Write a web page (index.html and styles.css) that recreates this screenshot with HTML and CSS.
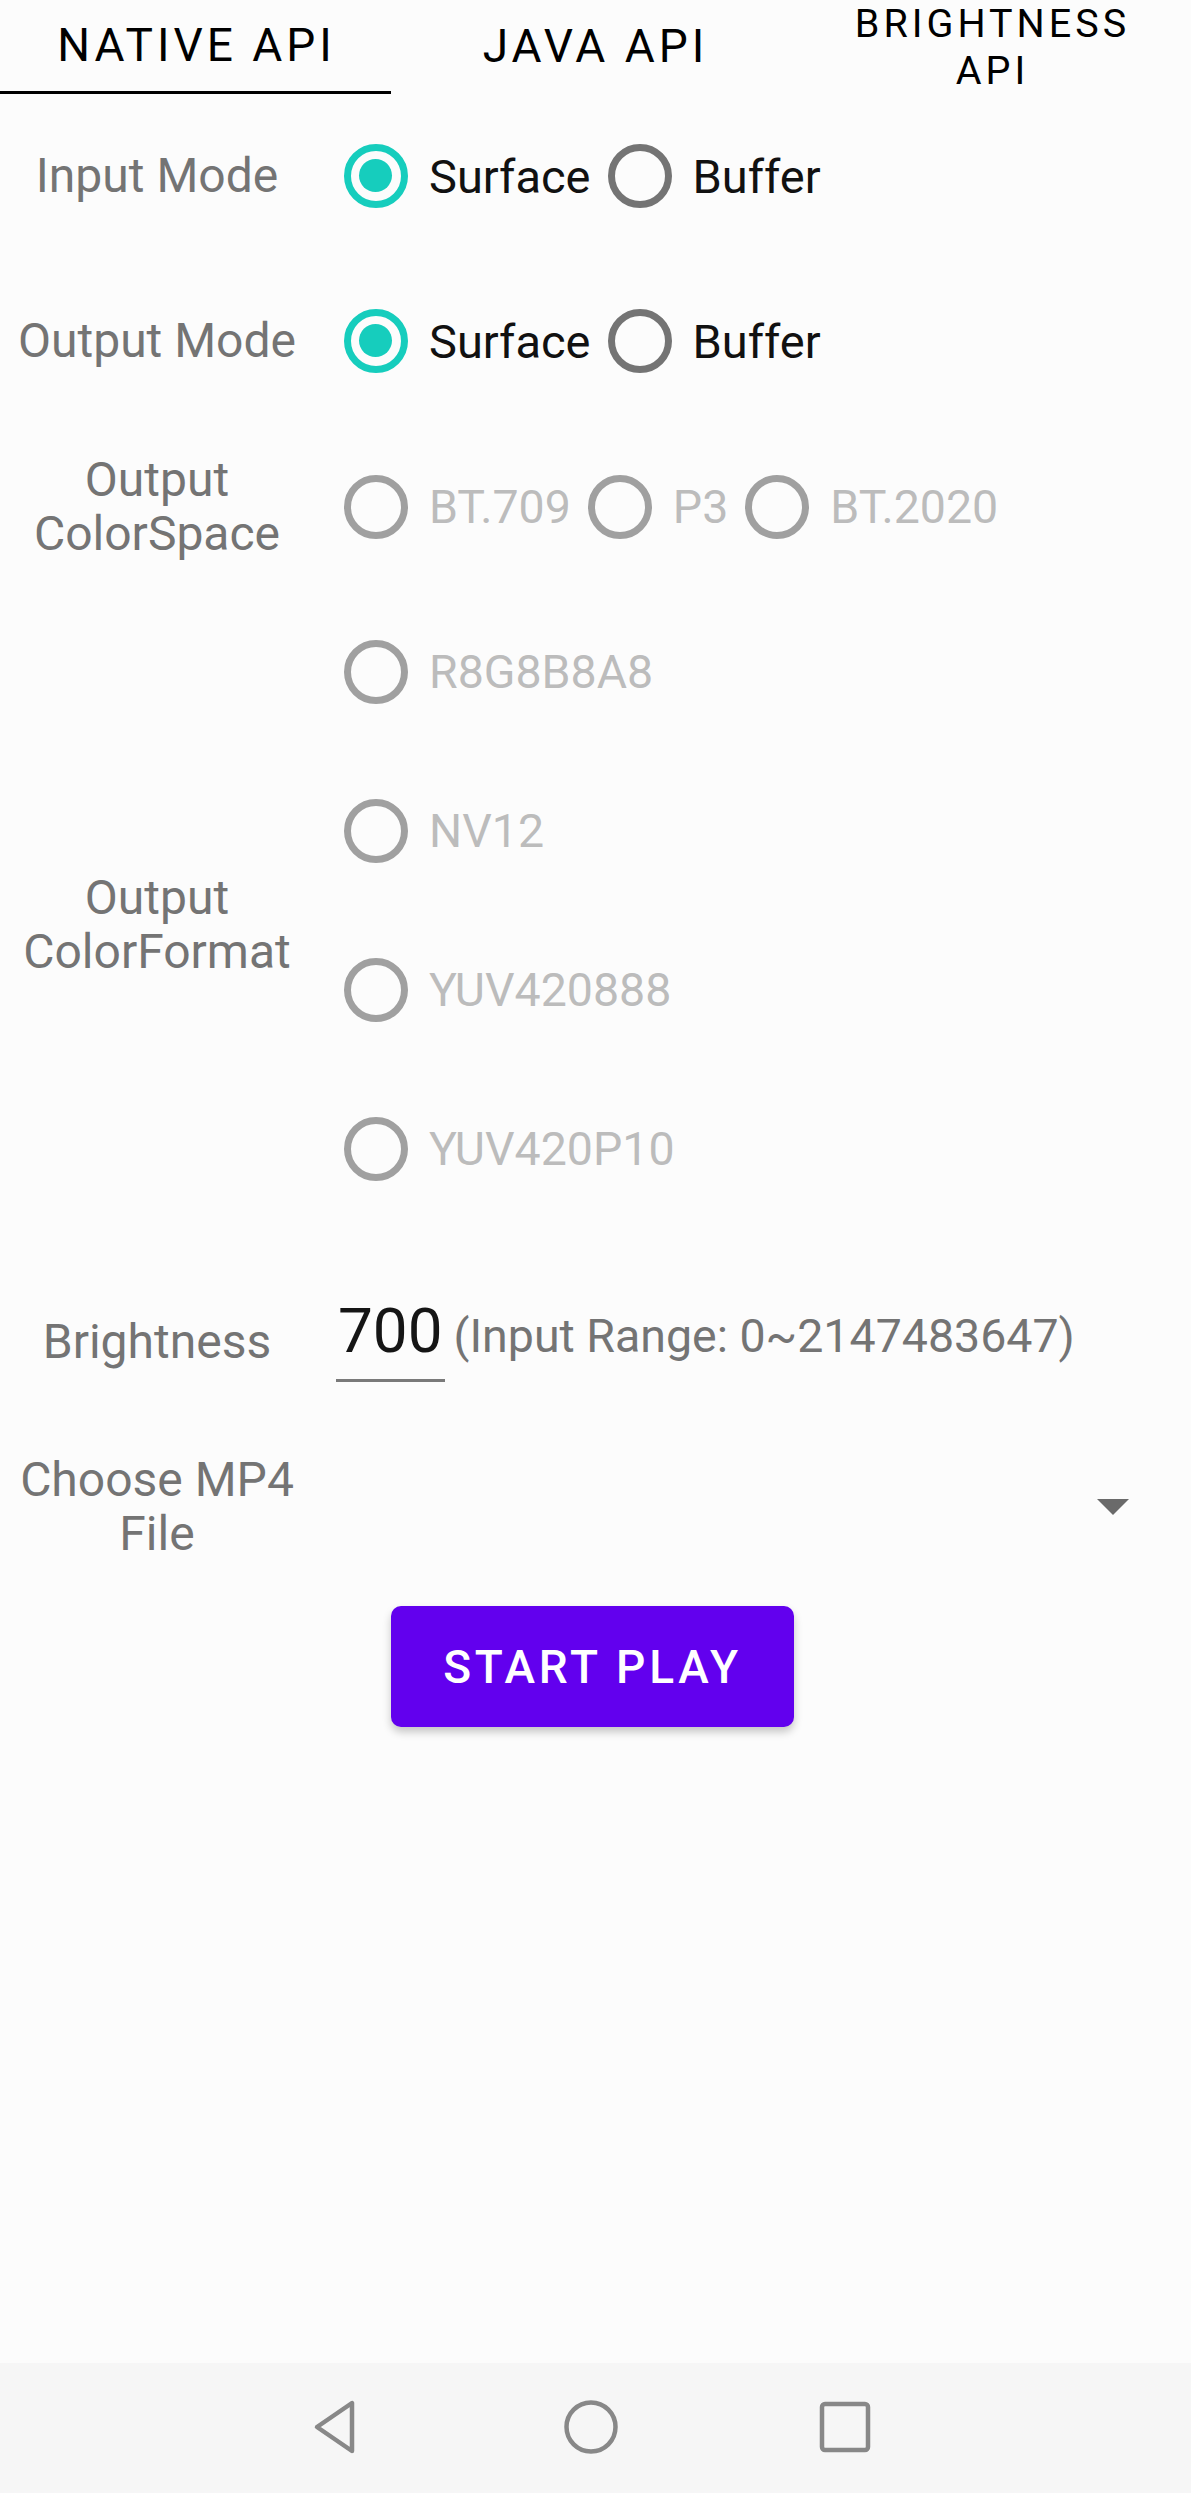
FILE: index.html
```html
<!DOCTYPE html>
<html>
<head>
<meta charset="utf-8">
<link rel="stylesheet" href="styles.css">
</head>
<body>
<div class="screen">
  <div class="tabs">
    <div class="tab active"><span>NATIVE API</span></div>
    <div class="tab"><span>JAVA API</span></div>
    <div class="tab multi"><span>BRIGHTNESS<br>API</span></div>
  </div>

  <div class="form">
    <div class="row r1 first">
      <div class="label">Input Mode</div>
      <div class="options">
        <div class="radio checked"><span class="dot"></span><span class="txt">Surface</span></div>
        <div class="radio"><span class="dot"></span><span class="txt">Buffer</span></div>
      </div>
    </div>
    <div class="row r1">
      <div class="label">Output Mode</div>
      <div class="options">
        <div class="radio checked"><span class="dot"></span><span class="txt">Surface</span></div>
        <div class="radio"><span class="dot"></span><span class="txt">Buffer</span></div>
      </div>
    </div>
    <div class="row r1">
      <div class="label">Output<br>ColorSpace</div>
      <div class="options">
        <div class="radio disabled"><span class="dot"></span><span class="txt">BT.709</span></div>
        <div class="radio disabled"><span class="dot"></span><span class="txt">P3</span></div>
        <div class="radio disabled"><span class="dot"></span><span class="txt">BT.2020</span></div>
      </div>
    </div>
    <div class="row fmt">
      <div class="label">Output<br>ColorFormat</div>
      <div class="options column">
        <div class="radio disabled item"><span class="dot"></span><span class="txt">R8G8B8A8</span></div>
        <div class="radio disabled item"><span class="dot"></span><span class="txt">NV12</span></div>
        <div class="radio disabled item"><span class="dot"></span><span class="txt">YUV420888</span></div>
        <div class="radio disabled item"><span class="dot"></span><span class="txt">YUV420P10</span></div>
      </div>
    </div>
    <div class="row bright">
      <div class="label">Brightness</div>
      <div class="bright-field">
        <span class="value">700</span>
        <span class="hint">(Input Range: 0~2147483647)</span>
      </div>
    </div>
    <div class="row choose">
      <div class="label">Choose MP4<br>File</div>
      <div class="spinner"><span class="arrow"></span></div>
    </div>
    <div class="btn-row">
      <button class="play">START PLAY</button>
    </div>
  </div>

  <div class="spacer"></div>

  <div class="navbar">
    <svg class="nav-icon" width="52" height="56" viewBox="0 0 52 56">
      <path d="M41 4 L41 52 L6 28 Z" fill="none" stroke="#888" stroke-width="4.5" stroke-linejoin="round"/>
    </svg>
    <svg class="nav-icon" width="56" height="56" viewBox="0 0 56 56">
      <circle cx="28" cy="28" r="24.5" fill="none" stroke="#888" stroke-width="4.5"/>
    </svg>
    <svg class="nav-icon" width="52" height="52" viewBox="0 0 52 52">
      <rect x="3" y="3" width="46" height="46" rx="3" fill="none" stroke="#888" stroke-width="4.5"/>
    </svg>
  </div>
</div>
</body>
</html>
```

FILE: styles.css
```css
* { box-sizing: border-box; }
html, body {
  margin: 0;
  padding: 0;
  background: #fcfcfc;
}
body {
  font-family: Roboto, "Noto Sans", "Liberation Sans", sans-serif;
}
.screen {
  width: 1191px;
  height: 2493px;
  display: flex;
  flex-direction: column;
  overflow: hidden;
}

/* Tabs */
.tabs {
  display: grid;
  grid-template-columns: repeat(3, 1fr);
  grid-template-rows: 94px;
  height: 94px;
  flex: none;
}
.tab {
  display: flex;
  justify-content: center;
  align-items: center;
  text-align: center;
  color: #000;
  font-size: 46px;
  letter-spacing: 4px;
  padding-bottom: 2px;
  overflow: visible;
}
.tab.active {
  border-bottom: 3px solid #000;
  margin-right: 6px;
  padding-left: 2px;
}
.tab.multi {
  font-size: 39.5px;
  line-height: 47px;
  align-items: flex-start;
  padding: 0;
}

/* Form rows */
.form {
  display: flex;
  flex-direction: column;
  flex: none;
}
.row {
  display: flex;
  align-items: center;
}
.r1 { height: 166px; }
.r1.first { height: 164px; }
.label {
  width: 314px;
  flex: none;
  text-align: center;
  color: #747474;
  font-size: 48px;
  line-height: 54px;
}
.options {
  display: flex;
  align-items: center;
  gap: 0;
}
.options.column {
  flex-direction: column;
  align-items: flex-start;
}
.radio {
  display: flex;
  align-items: center;
  height: 80px;
  padding-left: 30px;
  padding-right: 0;
}
.radio .dot {
  width: 64px;
  height: 64px;
  border-radius: 50%;
  border: 7.5px solid #747474;
  position: relative;
  flex: none;
}
.radio.checked .dot {
  border-color: #16cdbd;
}
.radio.checked .dot::after {
  content: "";
  position: absolute;
  left: 8px;
  top: 8px;
  width: 33px;
  height: 33px;
  border-radius: 50%;
  background: #16cdbd;
}
.radio.disabled .dot {
  border-color: #a0a0a0;
}
.radio .txt {
  font-size: 47px;
  color: #111;
  margin-left: 21px;
}
.radio + .radio { padding-left: 17px; }
.radio.disabled .txt { color: #bcbcbc; font-size: 46.5px; }
.options.column .radio + .radio { padding-left: 30px; }

.fmt { height: 640px; }
.item { height: 159px; }
.fmt .label { padding-top: 30px; }

/* Brightness */
.bright { height: 178px; margin-top: 20px; }
.bright .label { padding-top: 6px; }
.bright-field {
  display: flex;
  align-items: baseline;
  padding-left: 22px;
}
.value {
  font-size: 62px;
  color: #151515;
  padding: 0 2px 14px;
  border-bottom: 3px solid #7a7a7a;
  line-height: 68px;
}
.hint {
  font-size: 46.5px;
  color: #747474;
  margin-left: 9px;
}

/* Spinner */
.choose { height: 157px; }
.spinner {
  flex: 1;
  display: flex;
  justify-content: flex-end;
  align-items: center;
  padding-right: 62px;
  padding-top: 0;
}
.arrow {
  width: 0;
  height: 0;
  border-left: 16px solid transparent;
  border-right: 16px solid transparent;
  border-top: 16px solid #6a6a6a;
}

/* Button */
.btn-row {
  display: flex;
  justify-content: center;
  padding-top: 21px;
  padding-right: 6px;
}
.play {
  width: 403px;
  height: 121px;
  background: #6200ee;
  border: none;
  border-radius: 10px;
  color: #fff;
  font-family: Roboto, "Noto Sans", sans-serif;
  font-weight: 500;
  font-size: 46px;
  letter-spacing: 3.8px;
  box-shadow: 0 5px 8px rgba(0,0,0,0.22);
}

.spacer { flex: 1; }

/* Nav bar */
.navbar {
  height: 130px;
  flex: none;
  background: #f6f6f6;
  display: flex;
  justify-content: center;
  align-items: center;
  gap: 200px;
  padding-bottom: 2px;
  padding-right: 10px;
}
.nav-icon { display: block; }
```
